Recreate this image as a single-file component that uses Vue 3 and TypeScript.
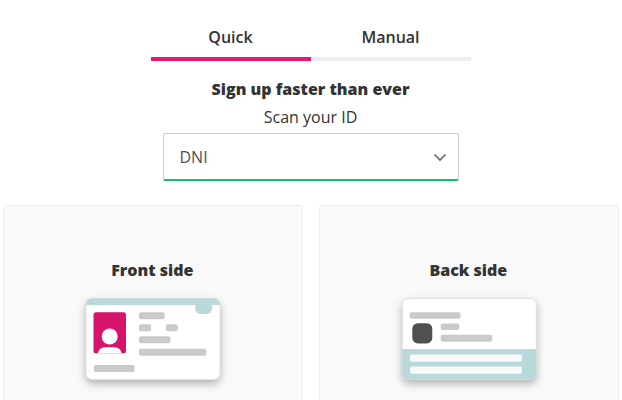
<script setup lang="ts">
import { ref } from 'vue'

const tabs: string[] = ['Quick', 'Manual']
const active = ref<string>('Quick')
</script>

<template>
  <main class="page">
    <nav class="tabs">
      <button v-for="tab in tabs" :key="tab" class="tab" :class="{ active: tab === active }" @click="active = tab">{{ tab }}</button>
    </nav>
    <h1 class="title">Sign up faster than ever</h1>
    <p class="subtitle">Scan your ID</p>
    <div class="select">
      <span>DNI</span>
      <svg class="chevron" viewBox="0 0 14 10" fill="none" stroke="#666" stroke-width="1.7">
        <path d="M1.5 2.5 7 8 12.5 2.5" />
      </svg>
    </div>
    <section class="sides">
      <article class="side">
        <h2>Front side</h2>
        <svg class="doc" viewBox="0 0 160 110">
          <defs>
            <clipPath id="front"><rect x="13" y="8.5" width="134" height="81" rx="6" /></clipPath>
            <clipPath id="photo"><rect x="20.5" y="22.3" width="32.5" height="41" rx="2.5" /></clipPath>
          </defs>
          <rect class="paper" x="13" y="8.5" width="134" height="81" rx="6" />
          <rect class="edge" x="13" y="8.5" width="134" height="81" rx="6" />
          <g clip-path="url(#front)">
            <rect class="teal" x="12" y="8" width="136" height="7" />
          </g>
          <rect class="teal" x="121.8" y="12" width="17.4" height="12" rx="6" />
          <g clip-path="url(#photo)">
            <rect x="20" y="22" width="34" height="42" fill="#d8136b" />
            <circle cx="36.7" cy="46.5" r="8" fill="#fff" />
            <path d="M25 64 C25 59 29 57.2 33 57.2 H40 C45 57.2 48.5 59 48.5 64Z" fill="#fff" />
          </g>
          <g class="line">
            <rect x="66" y="22.2" width="25.7" height="7" rx="2" />
            <rect x="66" y="34.2" width="12" height="7" rx="2" />
            <rect x="92.8" y="34.2" width="12" height="7" rx="2" />
            <rect x="66" y="46.2" width="31.5" height="7" rx="2" />
            <rect x="66" y="58.8" width="67.3" height="7" rx="2" />
            <rect x="20.8" y="75" width="40.8" height="7" rx="2" />
          </g>
        </svg>
      </article>
      <article class="side">
        <h2>Back side</h2>
        <svg class="doc" viewBox="0 0 160 110">
          <defs>
            <clipPath id="back"><rect x="13.3" y="8.5" width="134" height="81" rx="6" /></clipPath>
          </defs>
          <rect class="paper" x="13.3" y="8.5" width="134" height="81" rx="6" />
          <rect class="edge" x="13.3" y="8.5" width="134" height="81" rx="6" />
          <g clip-path="url(#back)">
            <rect class="teal" x="12" y="59" width="136" height="31" />
          </g>
          <g class="line">
            <rect x="20.5" y="22.2" width="51" height="6.6" rx="2" />
            <rect x="51.7" y="33.4" width="18.6" height="6.6" rx="2" />
            <rect x="51.7" y="44.8" width="51.5" height="7" rx="2" />
          </g>
          <rect x="23.3" y="33.2" width="20" height="20.2" rx="5.5" fill="#505050" />
          <rect x="21" y="64.4" width="112" height="7.4" rx="2" fill="#f9f9f9" />
          <rect x="21" y="76.4" width="112" height="7.4" rx="2" fill="#f9f9f9" />
        </svg>
      </article>
    </section>
  </main>
</template>

<style>
body {
  background: #fff;
  overflow: hidden;
}
</style>

<style scoped>
.page {
  box-sizing: border-box;
  height: 400px;
  overflow: hidden;
  display: flex;
  flex-direction: column;
  align-items: center;
  padding-top: 17px;
  font: 16px/24px "Open Sans", "Noto Sans", sans-serif;
  color: #333;
}
.page > * {
  flex: none;
}
.tabs {
  display: flex;
  width: 320px;
}
.tab {
  flex: 1;
  height: 44px;
  padding: 0 1px 0 0;
  border: 0;
  border-bottom: 4px solid #eee;
  background: none;
  font: 600 16px/24px "Open Sans", "Noto Sans", sans-serif;
  color: #333;
}
.tab.active {
  border-bottom-color: #ec1671;
}
.title {
  margin: 16px 0 0;
  padding-right: 1px;
  font-size: 16px;
  line-height: 24px;
  font-weight: 800;
}
.subtitle {
  margin: 4px 0 0;
  padding-right: 1px;
}
.select {
  box-sizing: border-box;
  width: 296px;
  height: 48px;
  margin-top: 4px;
  padding: 0 11px 0 15.5px;
  display: flex;
  align-items: center;
  justify-content: space-between;
  border: 1px solid #ccc;
  border-bottom: 2px solid #0cc177;
  border-radius: 2px;
  color: #505050;
}
.chevron {
  width: 14px;
  height: 10px;
}
.sides {
  display: flex;
  gap: 16px;
  margin-top: 24px;
}
.side {
  box-sizing: border-box;
  width: 300px;
  height: 240px;
  padding-top: 52px;
  display: flex;
  flex-direction: column;
  align-items: center;
  border: 1px solid #eee;
  border-radius: 4px;
  background: #f9f9f9;
}
.side h2 {
  margin: 0;
  padding-right: 1.5px;
  font-size: 16px;
  line-height: 24px;
  font-weight: 800;
}
.doc {
  width: 160px;
  height: 110px;
  margin-top: 8px;
  flex: none;
}
.paper {
  fill: #fff;
  filter: drop-shadow(0 4px 4px rgba(0, 0, 0, 0.3));
}
.edge {
  fill: none;
  stroke: #e2e2e2;
  stroke-width: 1;
}
.teal {
  fill: #b9d8da;
}
.line {
  fill: #cacaca;
}
</style>
